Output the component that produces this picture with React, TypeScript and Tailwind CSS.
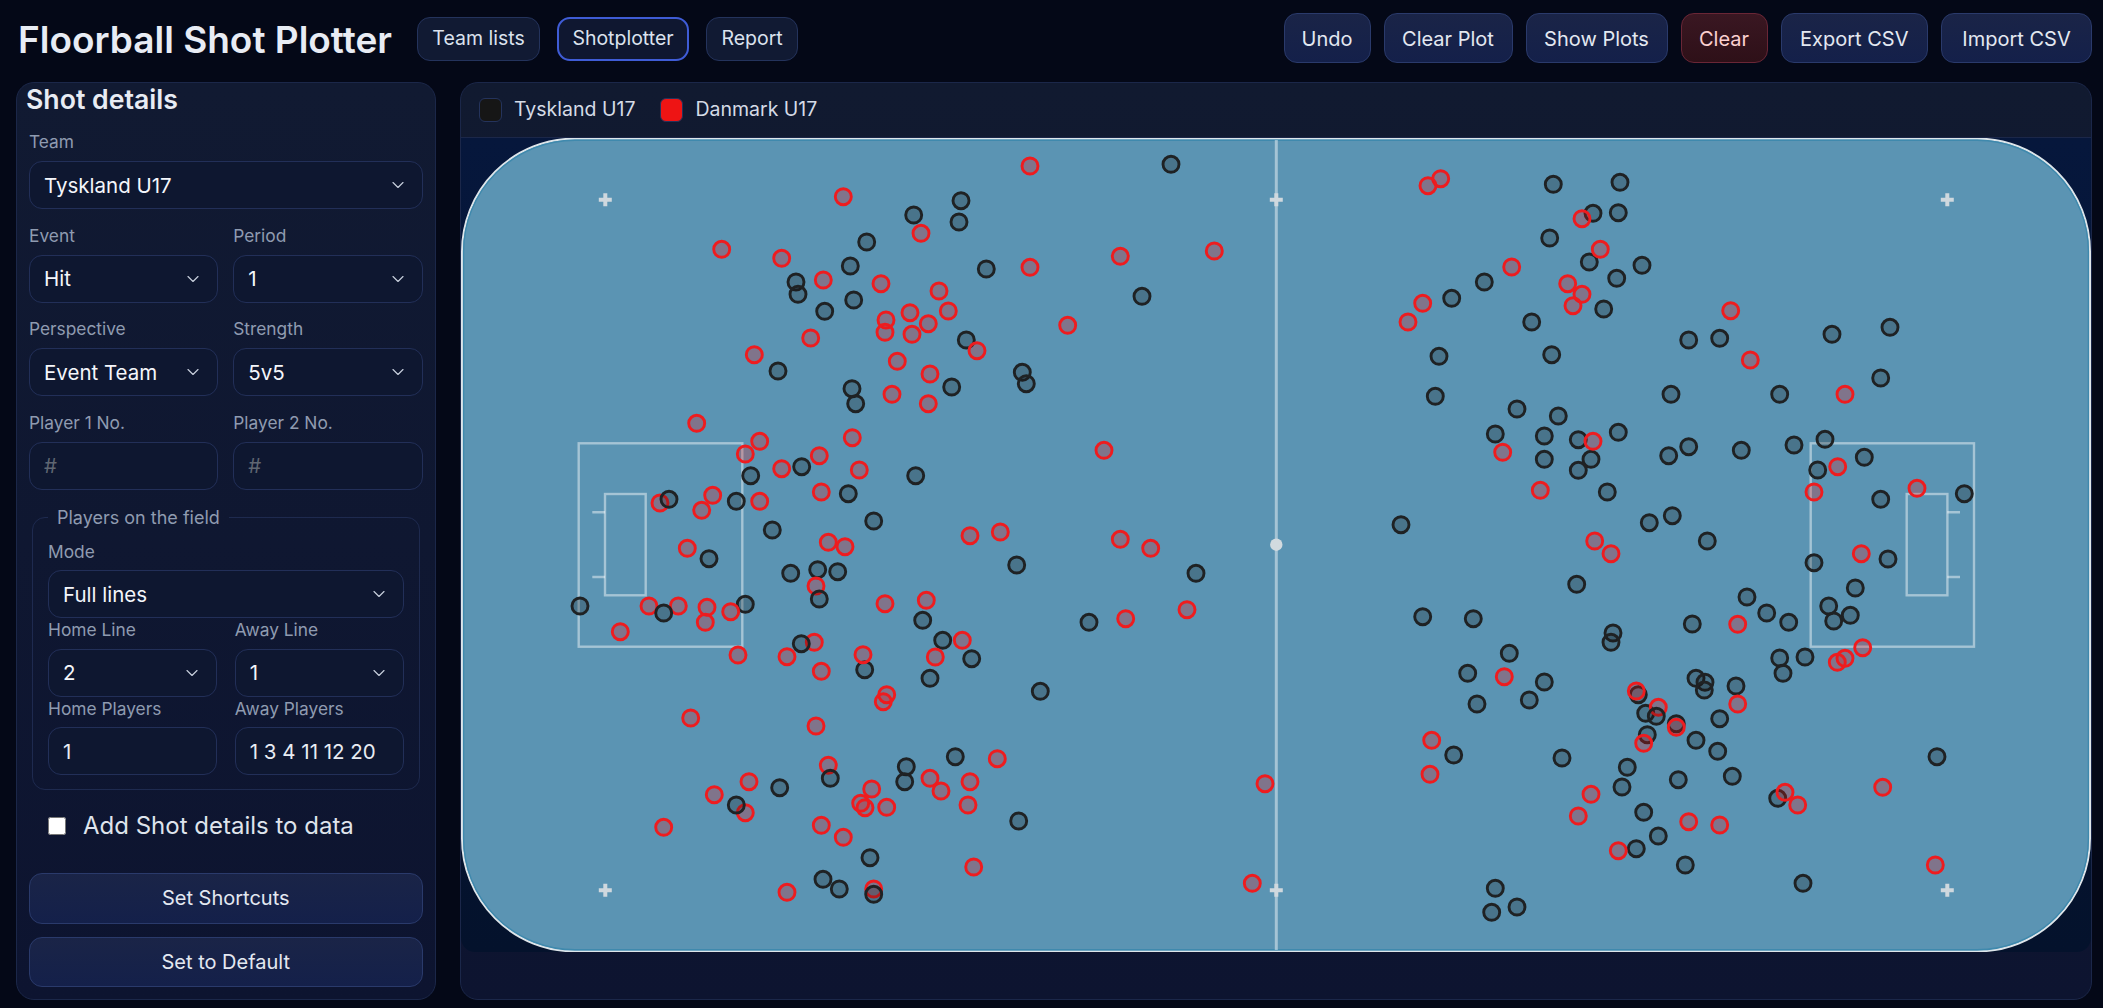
import { ChevronDown } from "lucide-react";
import type { ReactNode } from "react";

// shot coordinates are in rink svg units (same as page px, see viewBox)
const blackShots = [
  [866.7, 242], [850.3, 266], [796, 282], [798, 294.3], [853.7, 300], [824.7, 311.3], [778, 371], [852, 388.7],
  [855.7, 403.7], [750.7, 475.7], [801.7, 466.7], [848.3, 493.7], [736.3, 501.3], [772.3, 530], [873.7, 521],
  [709, 558.7], [790.7, 573.3], [817.7, 569.7], [837.7, 571.7], [580, 606], [745.3, 604.3], [864.7, 669.7],
  [779.7, 787.7], [870, 857.7], [823, 879.3], [839.3, 889], [1016.7, 565], [1196, 573.3], [922.7, 620.3],
  [1089, 622.3], [942.7, 640.3], [971.7, 658.7], [930, 678.3], [1040.3, 691.3], [955.3, 756.7], [906.3, 766.7],
  [904.7, 781.7], [1018.7, 821], [1171, 164.3], [961, 200.7], [913.7, 215], [959, 222], [986.3, 269],
  [1142, 296.3], [966.3, 340], [1022.3, 372.3], [1026.3, 383.7], [951.7, 387], [915.7, 475.7],
  [1553.3, 184.3], [1620, 182.3], [1593, 213.3], [1618.3, 212.7], [1549.7, 238], [1589.3, 262], [1642, 265.3],
  [1616.7, 278.3], [1484.3, 282], [1451.7, 298.3], [1603.7, 309], [1531.7, 322], [1688.7, 340], [1439, 356.3],
  [1551.7, 354.7], [1435.3, 396.3], [1671, 394.3], [1517, 409], [1558.3, 416], [1495.3, 434], [1544.3, 436],
  [1578.3, 439.7], [1618.3, 432.3], [1544.3, 459.3], [1591, 459.3], [1578.3, 470.3], [1668.7, 455.7],
  [1688.7, 446.7], [1607.3, 492], [1401, 524.7], [1649.3, 522.7], [1672.3, 515.7], [1707.3, 541],
  [1576.7, 584.3], [1422.7, 616.7], [1473.3, 618.7], [1692.3, 624], [1613, 633], [1611, 642.3], [1509.3, 653.3],
  [1467.7, 673.3], [1544.3, 682], [1529.3, 700], [1477, 704], [1696, 678.3], [1705, 682.3], [1704.3, 690],
  [1638.3, 694.7], [1645.7, 713.3], [1676.3, 723.7], [1647.3, 734.7], [1696, 740.3], [1627.3, 767.3],
  [1622, 787], [1678.3, 779.7], [1562, 758], [1453.7, 755], [1643.7, 812.3], [1658.3, 836], [1636.3, 848.7],
  [1685.3, 865], [1495.3, 888.3], [1517, 907], [1491.7, 912.3], [1719.7, 338.3], [1832, 334.3], [1890, 327.3],
  [1880.7, 378], [1779.7, 394.3], [1741.3, 450.3], [1794, 445], [1825, 439.3], [1864.3, 457.3], [1817.7, 470],
  [1880.7, 499.3], [1964.3, 493.7], [1814, 562.7], [1888, 559], [1747, 597], [1766.7, 613], [1788.7, 622.3],
  [1855.3, 588], [1828.7, 606], [1850.3, 615.3], [1833.7, 621], [1779.7, 658], [1805, 657], [1783, 673.3],
  [1736, 686], [1719.7, 718.7], [1717.7, 751.3], [1732.3, 776.3], [1777.7, 798.3], [1937, 756.7], [1803, 883.3],
];

const redShots = [
  [843.3, 196.7], [721.7, 249.3], [781.7, 258.3], [823.3, 280], [881, 283.7], [810.7, 338], [754.3, 354.7],
  [696.7, 423.3], [759.7, 441.3], [745.3, 454], [852.3, 437.7], [819.3, 455.7], [781.7, 468.7], [859.3, 470],
  [759.7, 501.3], [821.3, 492], [712.7, 495.3], [701.7, 510.3], [660, 503], [687.3, 548.3], [828.3, 542.3],
  [845, 546.7], [816, 586], [885, 603.7], [649, 606], [678.3, 606], [707, 607.3], [730.7, 611.7], [705.3, 622.3],
  [620.3, 631.7], [738, 655], [787, 656.7], [814.3, 642.3], [863, 654.7], [821.3, 671.3], [886.7, 694.7],
  [883.3, 701.7], [690.7, 718], [816, 726], [828.3, 765.3], [871.7, 789], [749, 781.7], [714.3, 794.7],
  [745.3, 812.7], [860.7, 803.3], [865, 807.7], [821.3, 825.3], [843.3, 837.3], [663.7, 827.3], [787, 892.3],
  [873.7, 889], [926.3, 600.3], [1125.7, 618.7], [1187, 609.7], [962.3, 640.3], [935.3, 657], [997.3, 758.7],
  [930, 778.3], [970, 781.7], [941, 791], [886.7, 807.3], [968, 805], [1265, 783.7], [973.7, 867], [1252.3, 883.3],
  [1030, 166], [921, 233.3], [1120.3, 256.3], [1214.3, 251], [1030, 267.3], [939, 291], [948.3, 311], [910, 312.7],
  [928.3, 323.7], [886, 320], [885, 332.3], [912, 334.3], [1067.7, 325.3], [977, 350.7], [897.3, 361.3], [930, 374],
  [892, 394.3], [928.3, 403.7], [1104, 450.3], [970, 535.7], [1000.3, 532], [1120.3, 539.3], [1150.7, 548.3],
  [1440.7, 178.7], [1428, 185.7], [1582, 218.7], [1600.3, 249.3], [1511.7, 267], [1567.7, 283.7], [1582, 294.3],
  [1573, 305.7], [1422.7, 303.3], [1408, 322], [1593, 441.3], [1502.7, 452.3], [1540.3, 490.3], [1594.7, 541],
  [1611, 553.7], [1504.3, 676.7], [1636.3, 691], [1658.3, 707.3], [1676.3, 727.3], [1643.7, 743.3], [1431.7, 740.3],
  [1430, 774.3], [1591, 794.3], [1578.3, 816], [1688.7, 821.7], [1618.3, 850.7], [1730.7, 310.7], [1750.3, 360],
  [1845, 394.3], [1837.7, 466.7], [1814, 492], [1917, 488.3], [1861.3, 553.7], [1737.7, 624.3], [1862.7, 647.7],
  [1845, 658.3], [1837.3, 662.3], [1737.7, 704], [1785, 792.3], [1797.7, 805], [1882.7, 787.3], [1719.7, 825],
  [1935.3, 865],
];

// these came after a red one and sit on top of it
const blackOnTop = [
  [669, 499.3], [819.3, 599], [663.7, 613], [801.3, 643.7], [830.3, 778.3], [736.3, 805], [873.7, 894.3], [1656.3, 716.3],
];

const crosses = [
  [605.3, 199.7], [605.3, 890.3], [1276.3, 199.7], [1276.3, 890.3], [1947.3, 199.7], [1947.3, 890.3],
];

function Field({ label, tight, children }: { label: string; tight?: boolean; children: ReactNode }) {
  return (
    <div>
      <label
        className={
          tight
            ? "mb-[8.5px] block h-[22px] text-[17.33px] leading-6 text-[#8f9bb0]"
            : "mb-[7px] block h-6 text-[17.33px] leading-6 text-[#8f9bb0]"
        }
      >
        {label}
      </label>
      {children}
    </div>
  );
}

function Select({ value }: { value: string }) {
  return (
    <div className="relative">
      <select
        defaultValue={value}
        className="h-12 w-full appearance-none rounded-[13px] border border-[#222f58] bg-[#0e1730] px-[14px] pt-[2px] text-[20.5px] text-[#f4f6fb] outline-none"
      >
        <option>{value}</option>
      </select>
      <ChevronDown
        size={20}
        strokeWidth={1.4}
        className="pointer-events-none absolute right-[15px] top-[14px] text-[#c6cedb]"
      />
    </div>
  );
}

function TextBox({ value, placeholder }: { value?: string; placeholder?: string }) {
  return (
    <input
      defaultValue={value}
      placeholder={placeholder}
      className="h-12 w-full rounded-[13px] border border-[#222f58] bg-[#0e1730] px-[14px] text-[20.5px] text-[#e8ecf3] outline-none placeholder:text-[#5f6672]"
    />
  );
}

function ToolButton({ label, className }: { label: string; className: string }) {
  return (
    <button
      className={`h-[50px] rounded-[13px] border border-[#2a3a6b] bg-gradient-to-b from-[#1a2447] to-[#14204a] pt-[1px] text-[20px] text-[#e3e8f1] ${className}`}
    >
      {label}
    </button>
  );
}

function Rink() {
  return (
    <svg viewBox="461 138 1630 814" className="block h-[814px] w-full">
      <rect x="462" y="138.6" width="1628" height="812.8" rx="113" fill="#5b94b3" stroke="#dde5ea" strokeWidth="2" />
      <rect x="463.6" y="140.2" width="1624.8" height="809.6" rx="111.4" fill="none" stroke="#3f89ad" strokeWidth="1.4" />

      <g fill="none" stroke="#ffffff" strokeOpacity="0.45" strokeWidth="2.4">
        <rect x="578.7" y="443.3" width="163.6" height="203.4" />
        <rect x="605" y="494" width="40.7" height="101.3" />
        <path d="M592.3 512.3H605M592.3 577H605" />
        <rect x="1810.7" y="443.3" width="163.3" height="203.4" />
        <rect x="1906.7" y="494" width="40.7" height="101.3" />
        <path d="M1947.3 512.3H1960M1947.3 577H1960" />
        <path d="M1276.3 140V950" strokeWidth="3" />
      </g>
      <circle cx="1276.3" cy="544.7" r="6.2" fill="#d2dadf" />
      {crosses.map(([x, y]) => (
        <path
          key={`${x}-${y}`}
          d={`M${x - 6.5} ${y}H${x + 6.5}M${x} ${y - 6.5}V${y + 6.5}`}
          stroke="#cfd8de"
          strokeWidth="4"
        />
      ))}

      {blackShots.map(([x, y]) => (
        <circle key={`b${x}-${y}`} cx={x} cy={y} r="8" fill="#141414" fillOpacity="0.25" stroke="#1f2224" strokeWidth="2.9" />
      ))}
      {redShots.map(([x, y]) => (
        <circle key={`r${x}-${y}`} cx={x} cy={y} r="8" fill="#f01414" fillOpacity="0.25" stroke="#ee1c1f" strokeWidth="2.9" />
      ))}
      {blackOnTop.map(([x, y]) => (
        <circle key={`t${x}-${y}`} cx={x} cy={y} r="8" fill="#141414" fillOpacity="0.25" stroke="#1f2224" strokeWidth="2.9" />
      ))}
    </svg>
  );
}

export default function App() {
  return (
    <div className="flex h-screen w-full flex-col overflow-hidden bg-[#040817] pb-2 pl-4 pr-[11px] pt-[13px] font-['Inter',sans-serif]">
      <header className="mb-[19px] flex h-[50px] items-center justify-between">
        <div className="mt-[2px] flex items-center gap-[25px]">
          <h1 className="ml-[2px] text-[37px] font-semibold leading-none text-[#e8ecf4]">Floorball Shot Plotter</h1>
          <nav className="flex gap-[17px]">
            <button className="h-11 w-[123px] rounded-[13px] border border-[#24335c] bg-[#111a33] text-[19.5px] text-[#dbe2ee]">
              Team lists
            </button>
            <button className="h-11 w-[132px] rounded-[13px] border-2 border-[#3f5cd6] bg-[#0f1730] text-[19.5px] text-[#dbe2ee]">
              Shotplotter
            </button>
            <button className="h-11 w-[92px] rounded-[13px] border border-[#24335c] bg-[#111a33] text-[19.5px] text-[#dbe2ee]">
              Report
            </button>
          </nav>
        </div>
        <div className="flex gap-[13px]">
          <ToolButton label="Undo" className="w-[87px]" />
          <ToolButton label="Clear Plot" className="w-[129px]" />
          <ToolButton label="Show Plots" className="w-[142px]" />
          <button className="h-[50px] w-[87px] rounded-[13px] border border-[#6a2636] bg-gradient-to-b from-[#3a1722] to-[#2e1018] pt-[1px] text-[20px] text-[#fbd0d0]">
            Clear
          </button>
          <ToolButton label="Export CSV" className="w-[147.5px]" />
          <ToolButton label="Import CSV" className="w-[151px]" />
        </div>
      </header>

      <div className="flex min-h-0 flex-1 gap-[24px]">
        <aside className="w-[420px] shrink-0 rounded-[18px] border border-[#1b2749] bg-gradient-to-b from-[#111a32] to-[#0d1430] pl-[12px] pr-[12.5px]">
          <h2 className="mb-[15px] ml-[-3px] h-8 text-[26.67px] font-semibold leading-8 text-[#e8ecf4]">Shot details</h2>
          <div className="flex flex-col gap-[14.5px]">
            <Field label="Team">
              <Select value="Tyskland U17" />
            </Field>
            <div className="grid grid-cols-2 gap-x-[15px] gap-y-[14.5px]">
              <Field label="Event">
                <Select value="Hit" />
              </Field>
              <Field label="Period">
                <Select value="1" />
              </Field>
              <Field label="Perspective">
                <Select value="Event Team" />
              </Field>
              <Field label="Strength">
                <Select value="5v5" />
              </Field>
              <Field label="Player 1 No.">
                <TextBox placeholder="#" />
              </Field>
              <Field label="Player 2 No.">
                <TextBox placeholder="#" />
              </Field>
            </div>
          </div>

          <fieldset className="mx-[3px] mt-4 rounded-[13px] border border-[#1e2a4f] px-[15px] pb-[14px]">
            <legend className="px-[9px] text-[18px] leading-6 text-[#8f9bb0]">Players on the field</legend>
            <div className="pt-[10px]">
              <Field label="Mode" tight>
                <Select value="Full lines" />
              </Field>
              <div className="grid grid-cols-2 gap-x-[18px]">
                <Field label="Home Line" tight>
                  <Select value="2" />
                </Field>
                <Field label="Away Line" tight>
                  <Select value="1" />
                </Field>
                <Field label="Home Players" tight>
                  <TextBox value="1" />
                </Field>
                <Field label="Away Players" tight>
                  <TextBox value="1 3 4 11 12 20" />
                </Field>
              </div>
            </div>
          </fieldset>

          <label className="mb-[31px] ml-[19px] mt-5 flex h-8 items-center gap-[17px] text-[24px] text-[#dfe4ec]">
            <input type="checkbox" className="h-[18px] w-[18px]" />
            Add Shot details to data
          </label>

          <div className="flex flex-col gap-[13px]">
            <button className="h-[50.5px] rounded-[13px] border border-[#2a3a6b] bg-gradient-to-b from-[#1a2447] to-[#14204a] text-[20px] text-[#e3e8f1]">
              Set Shortcuts
            </button>
            <button className="h-[50.5px] rounded-[13px] border border-[#2a3a6b] bg-gradient-to-b from-[#1a2447] to-[#14204a] text-[20px] text-[#e3e8f1]">
              Set to Default
            </button>
          </div>
        </aside>

        <main className="min-w-0 flex-1 rounded-[18px] border border-[#1b2749] bg-gradient-to-b from-[#111a30] to-[#0d1430]">
          <div className="flex h-[55px] items-center gap-[25px] border-b border-[#1b2749] pl-[18px]">
            <div className="flex items-center gap-3">
              <span className="h-6 w-[23px] rounded-[6px] border border-[#24335c] bg-[#161616]" />
              <span className="text-[19.5px] text-[#d5dbe6]">Tyskland U17</span>
            </div>
            <div className="flex items-center gap-3">
              <span className="h-6 w-[23px] rounded-[6px] border border-[#24335c] bg-[#ee1414]" />
              <span className="text-[19.5px] text-[#d5dbe6]">Danmark U17</span>
            </div>
          </div>
          <div className="overflow-hidden rounded-b-[14px] bg-gradient-to-b from-[#06173c] to-[#04122c]">
            <Rink />
          </div>
        </main>
      </div>
    </div>
  );
}
